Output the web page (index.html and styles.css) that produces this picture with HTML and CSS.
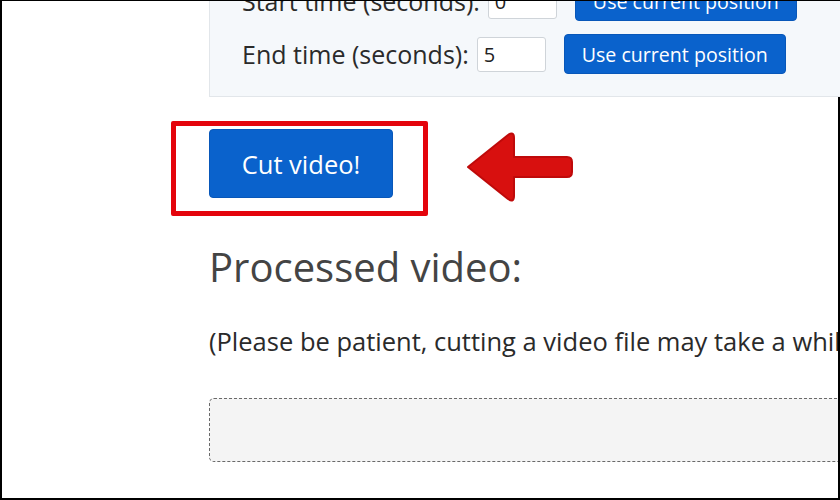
FILE: index.html
```html
<!DOCTYPE html>
<html lang="en">
<head>
<meta charset="utf-8">
<title>Cut video</title>
<link rel="stylesheet" href="styles.css">
</head>
<body>
<div class="frame">
  <div class="page">
    <div class="panel">
      <div class="row">
        <label class="label">Start time (seconds):</label>
        <input class="time" type="text" value="0">
        <button class="btn btn-small">Use current position</button>
      </div>
      <div class="row">
        <label class="label">End time (seconds):</label>
        <input class="time" type="text" value="5">
        <button class="btn btn-small">Use current position</button>
      </div>
    </div>

    <div class="cut-area">
      <button class="btn btn-cut">Cut video!</button>
      <div class="highlight"></div>
      <svg class="arrow" width="120" height="90" viewBox="0 0 120 90">
        <path d="M3 44 L43 12 Q49 8 49 15 L49 34 L102 34 Q107 34 107 39 L107 49 Q107 54 102 54 L49 54 L49 73 Q49 80 43 76 Z" fill="#d8100f" stroke="#bf0a0a" stroke-width="2" stroke-linejoin="round"/>
      </svg>
    </div>

    <h2 class="heading">Processed video:</h2>
    <p class="note">(Please be patient, cutting a video file may take a while)</p>
    <div class="result"></div>
  </div>
</div>
</body>
</html>
```

FILE: styles.css
```css
html, body {
  margin: 0;
  padding: 0;
  background: #ffffff;
}

.frame {
  position: relative;
  width: 840px;
  height: 500px;
  box-sizing: border-box;
  border-top: 1px solid #000;
  border-left: 2px solid #000;
  border-bottom: 2px solid #000;
  overflow: hidden;
  font-family: "Open Sans", "Liberation Sans", sans-serif;
  color: #222;
}

.frame::after {
  content: "";
  position: absolute;
  right: 0;
  top: 96px;
  bottom: 0;
  width: 2px;
  background: #000;
}

.page {
  margin-top: -41px;
  padding-left: 207px;
}

.panel {
  background: #f5f8fb;
  border: 1px solid #e2e6ea;
  padding: 20px 0 22px 32px;
  margin-right: -20px;
  display: flex;
  flex-direction: column;
  gap: 13px;
}

.row {
  display: flex;
  align-items: center;
  height: 40px;
}

.label {
  font-size: 25px;
  color: #2a2a2a;
  white-space: nowrap;
}

.time {
  margin-left: 8px;
  width: 69px;
  height: 35px;
  box-sizing: border-box;
  border: 1px solid #cfd4d9;
  border-radius: 3px;
  background: #fff;
  padding: 0 6px;
  font-family: "Open Sans", "Liberation Sans", sans-serif;
  font-size: 20px;
  color: #222;
}

.btn {
  background: #0a62cc;
  border: 1px solid #0857b9;
  color: #fff;
  font-family: "Open Sans", "Liberation Sans", sans-serif;
  border-radius: 4px;
  cursor: pointer;
}

.btn-small {
  margin-left: 18px;
  height: 40px;
  width: 222px;
  font-size: 19.6px;
  padding: 0;
}

.cut-area {
  position: relative;
  margin-top: 32px;
  height: 69px;
}

.btn-cut {
  width: 184px;
  height: 69px;
  font-size: 25.5px;
  padding: 0;
}

.highlight {
  position: absolute;
  left: -38px;
  top: -8px;
  width: 257px;
  height: 95px;
  box-sizing: border-box;
  border: 5px solid #e4040c;
  border-radius: 2px;
}

.arrow {
  position: absolute;
  left: 256px;
  top: -6px;
}

.heading {
  margin: 45px 0 0 0;
  font-size: 40px;
  line-height: 48px;
  font-weight: 400;
  color: #444;
}

.note {
  margin: 32px 0 0 0;
  font-size: 25.5px;
  line-height: 37px;
  color: #2a2a2a;
  white-space: nowrap;
}

.result {
  margin-top: 38px;
  margin-right: -30px;
  height: 64px;
  box-sizing: border-box;
  background: #f4f4f4;
  border: 1px dashed #6a6a6a;
  border-radius: 5px;
}
```
